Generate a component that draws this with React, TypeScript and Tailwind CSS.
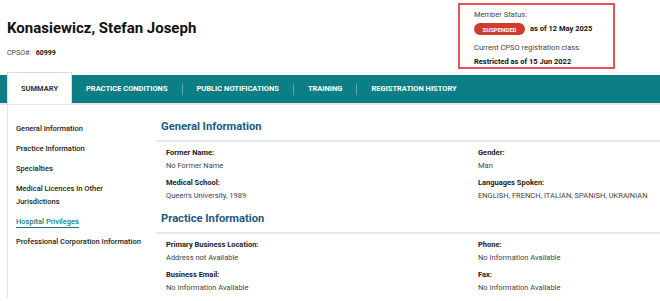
import React from 'react'

const tabs = ['PRACTICE CONDITIONS', 'PUBLIC NOTIFICATIONS', 'TRAINING', 'REGISTRATION HISTORY']

const sideItems = [
  'General Information',
  'Practice Information',
  'Specialties',
  'Medical Licences In Other Jurisdictions',
  'Hospital Privileges',
  'Professional Corporation Information',
]

function Field({ label, value }: { label: string; value: string }) {
  return (
    <div className="mb-[4px]">
      <div className="text-[7.5px] font-bold text-[#222] leading-[13px]">{label}</div>
      <div className="text-[7.5px] text-[#444] leading-[13px]">{value}</div>
    </div>
  )
}

function Section({
  title,
  left,
  right,
}: {
  title: string
  left: [string, string][]
  right: [string, string][]
}) {
  return (
    <section>
      <h2 className="pl-[5px] text-[11.2px] font-bold text-[#1b5b82] leading-[20px] pb-[3px] border-b-2 border-[#e4e7eb]">
        {title}
      </h2>
      <div className="grid grid-cols-[312px_1fr] pl-[10px] pt-[4px]">
        <div>
          {left.map(([l, v]) => (
            <Field key={l} label={l} value={v} />
          ))}
        </div>
        <div>
          {right.map(([l, v]) => (
            <Field key={l} label={l} value={v} />
          ))}
        </div>
      </div>
    </section>
  )
}

export default function App() {
  return (
    <div className="w-[660px] h-[301px] overflow-hidden bg-white font-['Roboto',sans-serif] text-[#222]">
      {/* header */}
      <div className="flex h-[75px] px-[7px]">
        <div className="pt-[16px]">
          <h1 className="text-[15px] font-bold leading-[24px] text-[#111]">Konasiewicz, Stefan Joseph</h1>
          <div className="mt-[8px] text-[7px] text-[#444]">
            CPSO#: <span className="ml-[3px] font-bold text-[#111]">60999</span>
          </div>
        </div>
        <div className="ml-auto mr-[38px] mt-[3px] h-[66px] w-[157px] border-2 border-[#e9525a] pl-[14px] pt-[4px]">
          <div className="text-[7.5px] text-[#444] leading-[12px]">Member Status:</div>
          <div className="flex items-center gap-[5px] mt-[2px]">
            <span className="shrink-0 h-[12px] w-[51px] rounded-full bg-[#cf3b2d] text-white text-[6px] font-bold flex items-center justify-center">
              SUSPENDED
            </span>
            <span className="text-[7.5px] font-bold text-[#111]">as of 12 May 2025</span>
          </div>
          <div className="mt-[7px] text-[7.5px] text-[#444] leading-[12px]">Current CPSO registration class:</div>
          <div className="mt-[2px] text-[7.5px] font-bold text-[#111] leading-[12px]">Restricted as of 15 Jun 2022</div>
        </div>
      </div>

      {/* tab bar */}
      <div className="flex h-[28px] bg-[#0c7f86] pl-[7px] border-b-2 border-[#e6e6e6] box-content">
        <div className="-mt-[3px] h-[32px] w-[65px] bg-white border border-b-0 border-[#dcdcdc] flex items-center justify-center text-[7.5px] font-bold text-[#333]">
          SUMMARY
        </div>
        <div className="flex items-center">
          {tabs.map((t, i) => (
            <div key={t} className="flex items-center">
              {i > 0 && <span className="h-[11px] w-px bg-[#5fa9ad]" />}
              <span className="px-[14px] text-[7.5px] font-bold text-white">{t}</span>
            </div>
          ))}
        </div>
      </div>

      {/* body */}
      <div className="flex">
        <nav className="ml-[7px] w-[149px] border-l border-[#e3e3e3] pl-[8px] pt-[17px]">
          {sideItems.map((s) => (
            <div
              key={s}
              className={
                s === 'Hospital Privileges'
                  ? 'mb-[7px] w-fit text-[7.5px] font-medium leading-[13px] text-[#0c7f86] underline decoration-[#0c7f86] underline-offset-[3px]'
                  : 'mb-[7px] pr-[8px] text-[7.5px] font-medium leading-[13px] text-[#222]'
              }
            >
              {s === 'Medical Licences In Other Jurisdictions' ? (
                <>
                  Medical Licences In Other
                  <br />
                  Jurisdictions
                </>
              ) : (
                s
              )}
            </div>
          ))}
        </nav>
        <main className="flex-1 pt-[12px]">
          <Section
            title="General Information"
            left={[
              ['Former Name:', 'No Former Name'],
              ['Medical School:', "Queen's University, 1989"],
            ]}
            right={[
              ['Gender:', 'Man'],
              ['Languages Spoken:', 'ENGLISH, FRENCH, ITALIAN, SPANISH, UKRAINIAN'],
            ]}
          />
          <div className="h-[3px]" />
          <Section
            title="Practice Information"
            left={[
              ['Primary Business Location:', 'Address not Available'],
              ['Business Email:', 'No Information Available'],
            ]}
            right={[
              ['Phone:', 'No Information Available'],
              ['Fax:', 'No Information Available'],
            ]}
          />
        </main>
      </div>
    </div>
  )
}
